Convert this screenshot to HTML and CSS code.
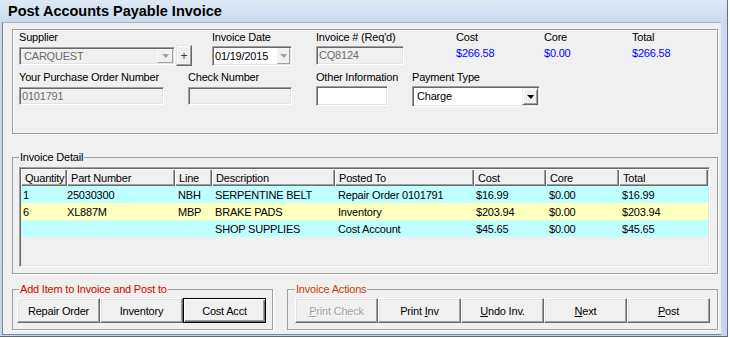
FILE: index.html
```html
<!DOCTYPE html>
<html lang="en">
<head>
  <meta charset="UTF-8" />
  <title>Post Accounts Payable Invoice</title>
  <link rel="stylesheet" href="styles.css">
</head>
<body>

<div class="window">
  <div class="title-bar">Post Accounts Payable Invoice</div>

  <div class="client">

    <div class="header-box">
      <div class="field-row">
        <div class="field f-supplier">
          <label>Supplier</label>
          <div class="combo-line">
            <div class="sunken combo disabled combo-supplier">
              <span class="value">CARQUEST</span>
              <span class="drop-btn"><i class="arrow gray"></i></span>
            </div>
            <button class="plus-btn">+</button>
          </div>
        </div>
        <div class="field f-date">
          <label>Invoice Date</label>
          <div class="sunken combo date-box">
            <span class="value">01/19/2015</span>
            <span class="drop-btn small"><i class="arrow gray"></i></span>
          </div>
        </div>
        <div class="field f-invno">
          <label>Invoice # (Req'd)</label>
          <div class="sunken textbox disabled invno-box">CQ8124</div>
        </div>
        <div class="field f-money">
          <label>Cost</label>
          <div class="money">$266.58</div>
        </div>
        <div class="field f-money">
          <label>Core</label>
          <div class="money">$0.00</div>
        </div>
        <div class="field">
          <label>Total</label>
          <div class="money">$266.58</div>
        </div>
      </div>

      <div class="field-row">
        <div class="field f-po">
          <label>Your Purchase Order Number</label>
          <div class="sunken textbox disabled po-box">0101791</div>
        </div>
        <div class="field f-check">
          <label>Check Number</label>
          <div class="sunken textbox disabled check-box"></div>
        </div>
        <div class="field f-other">
          <label>Other Information</label>
          <div class="sunken textbox other-box"></div>
        </div>
        <div class="field">
          <label>Payment Type</label>
          <div class="sunken combo pay-combo">
            <span class="value">Charge</span>
            <span class="drop-btn dark"><i class="arrow"></i></span>
          </div>
        </div>
      </div>
    </div>

    <fieldset class="group detail-group">
      <legend>Invoice Detail</legend>
      <div class="sunken listview">
        <table>
          <colgroup>
            <col style="width:46px"><col style="width:108px"><col style="width:37px"><col style="width:123px">
            <col style="width:139px"><col style="width:72px"><col style="width:73px"><col style="width:89px">
          </colgroup>
          <thead>
            <tr>
              <th>Quantity</th><th>Part Number</th><th>Line</th><th>Description</th>
              <th>Posted To</th><th>Cost</th><th>Core</th><th>Total</th>
            </tr>
          </thead>
          <tbody>
            <tr class="row-cyan">
              <td>1</td><td class="part">25030300</td><td>NBH</td><td>SERPENTINE BELT</td>
              <td>Repair Order 0101791</td><td class="cost">$16.99</td><td>$0.00</td><td>$16.99</td>
            </tr>
            <tr class="row-yellow">
              <td>6</td><td class="part">XL887M</td><td>MBP</td><td>BRAKE PADS</td>
              <td>Inventory</td><td class="cost">$203.94</td><td>$0.00</td><td>$203.94</td>
            </tr>
            <tr class="row-cyan">
              <td></td><td class="part"></td><td></td><td>SHOP SUPPLIES</td>
              <td>Cost Account</td><td class="cost">$45.65</td><td>$0.00</td><td>$45.65</td>
            </tr>
          </tbody>
        </table>
      </div>
    </fieldset>

    <div class="bottom-row">
      <fieldset class="group add-group">
        <legend class="legend-red">Add Item to Invoice and Post to</legend>
        <div class="button-row">
          <button class="btn">Repair Order</button>
          <button class="btn">Inventory</button>
          <button class="btn default">Cost Acct</button>
        </div>
      </fieldset>
      <fieldset class="group actions-group">
        <legend class="legend-orange">Invoice Actions</legend>
        <div class="button-row">
          <button class="btn disabled"><u>P</u>rint Check</button>
          <button class="btn">Print <u>I</u>nv</button>
          <button class="btn"><u>U</u>ndo Inv.</button>
          <button class="btn"><u>N</u>ext</button>
          <button class="btn"><u>P</u>ost</button>
        </div>
      </fieldset>
    </div>

  </div>
</div>

</body>
</html>
```

FILE: styles.css
```css
* {
  box-sizing: border-box;
}

body {
  margin: 0;
  font-family: 'Liberation Sans', Arial, sans-serif;
  font-size: 11px;
  letter-spacing: -0.2px;
  color: #000;
  background-color: #fff;
}

/* window frame */
.window {
  width: 728px;
  height: 337px;
  display: flex;
  flex-direction: column;
  padding: 0 6px 1px 2px;
  background: linear-gradient(#dfe9f5 0, #cadaee 22px, #c3d5ea 100%);
  border-right: 1px solid #5f6f85;
  border-bottom: 1px solid #5f6f85;
}

.title-bar {
  height: 22px;
  line-height: 22px;
  padding-left: 6px;
  font-size: 14.5px;
  font-weight: bold;
  letter-spacing: 0;
}

.client {
  flex: 1;
  background-color: #f0f0f0;
  border-top: 1px solid #a4b1c2;
  border-left: 1px solid #7b8796;
  border-bottom: 1px solid #7b8796;
  padding: 6px 0 0 9px;
}

/* common 3d styles */
.sunken {
  border: 1px solid;
  border-color: #a0a0a0 #fff #fff #a0a0a0;
  box-shadow: inset 1px 1px #696969, inset -1px -1px #e3e3e3;
  background-color: #fff;
}

.sunken.disabled {
  background-color: #f0f0f0;
  color: #6d6d6d;
}

/* header form */
.header-box {
  width: 706px;
  height: 105px;
  padding: 1px 0 0 6px;
  border: 1px solid #a0a0a0;
  box-shadow: inset 1px 1px #fff, 1px 1px #fff;
}

.field-row {
  display: flex;
  height: 40px;
}

.field label {
  display: block;
  height: 13px;
  line-height: 13px;
}

.f-supplier { width: 193px; }
.f-date { width: 104px; }
.f-invno { width: 140px; }
.f-money { width: 88px; }
.f-po { width: 169px; }
.f-check { width: 128px; }
.f-other { width: 96px; }

.textbox {
  line-height: 16px;
  padding: 0 2px;
}

.combo {
  display: flex;
  padding: 1px;
}

.combo .value {
  flex: 1;
  line-height: 15px;
  padding-left: 1px;
}

.combo-line {
  display: flex;
  align-items: flex-start;
  margin-top: 1px;
}

.combo-supplier {
  width: 156px;
  height: 18px;
  margin-top: 2px;
}

.combo-supplier .value {
  padding-left: 3px;
}

.date-box {
  width: 80px;
  height: 20px;
  margin-top: 2px;
}

.date-box .value {
  line-height: 17px;
}

.invno-box {
  width: 88px;
  height: 19px;
  margin-top: 2px;
  line-height: 17px;
}

.po-box,
.check-box {
  width: 145px;
  height: 18px;
  margin-top: 3px;
}

.check-box {
  width: 104px;
}

.other-box {
  width: 72px;
  height: 20px;
  margin-top: 2px;
}

.pay-combo {
  width: 128px;
  height: 21px;
  margin-top: 2px;
}

.pay-combo .value {
  line-height: 17px;
  padding-left: 3px;
}

.money {
  margin-top: 3px;
  line-height: 13px;
  color: #0000ff;
}

.drop-btn {
  width: 16px;
  display: flex;
  align-items: center;
  justify-content: center;
  background-color: #f0f0f0;
  border: 1px solid;
  border-color: #f8f8f8 #a0a0a0 #a0a0a0 #f8f8f8;
}

.drop-btn.small {
  width: 13px;
}

.drop-btn.dark {
  border-color: #f0f0f0 #696969 #696969 #f0f0f0;
  box-shadow: inset 1px 1px #fff, inset -1px -1px #a0a0a0;
}

.arrow {
  width: 0;
  height: 0;
  border-left: 4px solid transparent;
  border-right: 3px solid transparent;
  border-top: 4px solid #000;
}

.arrow.gray {
  border-top-color: #a0a0a0;
}

.plus-btn {
  width: 16px;
  height: 21px;
  margin-left: 1px;
  padding: 0;
  font-family: inherit;
  font-size: 12px;
  color: #404040;
  background-color: #f0f0f0;
  border: 1px solid;
  border-color: #e3e3e3 #696969 #696969 #e3e3e3;
  box-shadow: inset -1px -1px #a0a0a0, inset 1px 1px #fff;
}

/* group boxes */
.group {
  margin: 0;
  border: 1px solid #a0a0a0;
  box-shadow: 1px 1px #fff;
  min-width: 0;
}

.group legend {
  padding: 0 1px;
  line-height: 13px;
}

.detail-group {
  width: 706px;
  margin-top: 17px;
  padding: 3px 0 6px 6px;
}

.listview {
  width: 691px;
  height: 100px;
  padding: 1px;
  background-color: #f0f0f0;
  overflow: hidden;
}

.listview table {
  width: 687px;
  table-layout: fixed;
  border-collapse: collapse;
}

.listview th {
  height: 17px;
  padding: 0 0 0 4px;
  text-align: left;
  font-weight: normal;
  background-color: #f0f0f0;
  box-shadow: inset 1px 1px #fff, inset -1px -1px #696969, inset -2px -2px #a0a0a0;
  white-space: nowrap;
  overflow: hidden;
}

.listview td {
  height: 17px;
  padding: 0 0 0 3px;
  white-space: nowrap;
  overflow: hidden;
}

.listview td:first-child {
  padding-left: 2px;
}

.listview td.part {
  padding-left: 0;
}

.listview td.cost {
  padding-left: 2px;
}

.row-cyan td {
  background-color: #c0ffff;
}

.row-yellow td {
  background-color: #ffffc0;
}

/* bottom button groups */
.bottom-row {
  display: flex;
  gap: 14px;
  margin-top: 9px;
}

.add-group {
  width: 261px;
  padding: 2px 0 6px 4px;
}

.add-group legend {
  margin-left: 2px;
}

.actions-group {
  width: 431px;
  padding: 2px 0 6px 7px;
}

.legend-red {
  color: #d40000;
}

.legend-orange {
  color: #c83c0a;
}

.button-row {
  display: flex;
}

.btn {
  width: 83px;
  height: 25px;
  padding: 0;
  font-family: inherit;
  font-size: 11px;
  letter-spacing: inherit;
  color: #000;
  background-color: #f0f0f0;
  border: 1px solid;
  border-color: #fff #696969 #696969 #fff;
  box-shadow: inset -1px -1px #a0a0a0, inset 1px 1px #e3e3e3;
}

.btn.default {
  border-color: #000;
  box-shadow: inset 1px 1px #fff, inset -1px -1px #696969, inset -2px -2px #a0a0a0;
}

.btn.disabled {
  color: #a0a0a0;
  text-shadow: 1px 1px #fff;
}
```
